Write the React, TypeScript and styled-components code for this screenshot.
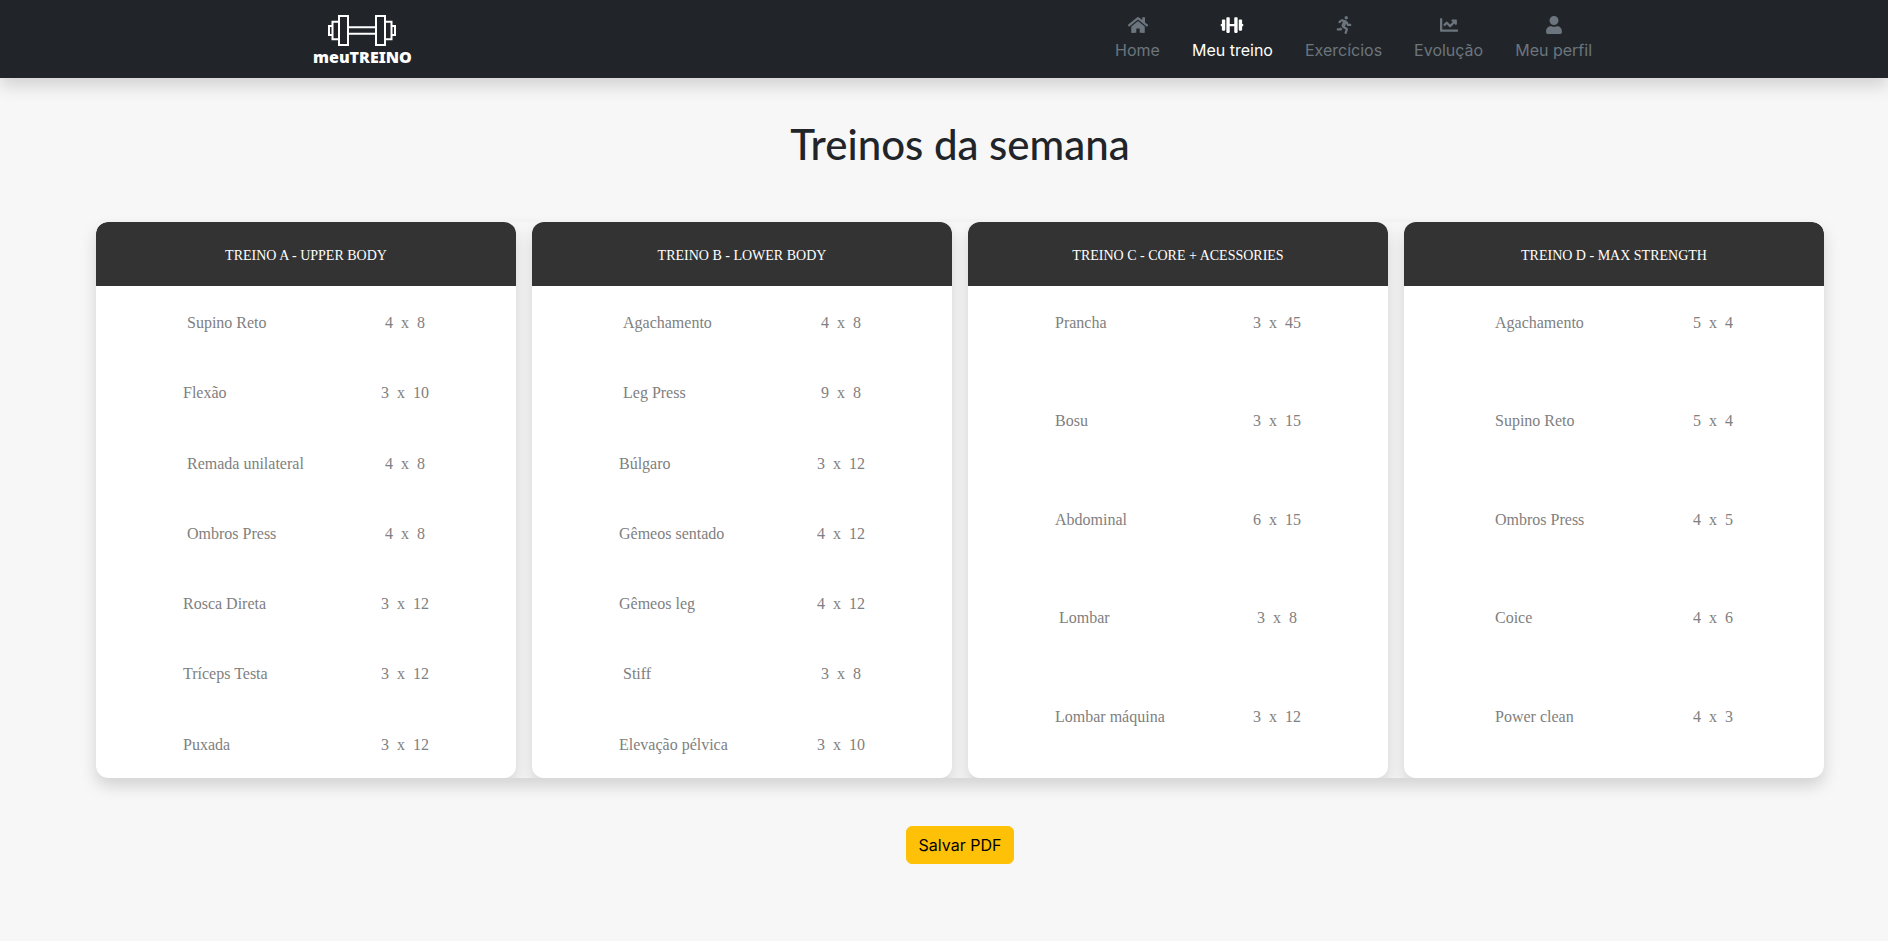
import React from "react";
import styled, { createGlobalStyle } from "styled-components";
import { FaHome, FaDumbbell, FaRunning, FaChartLine, FaUser } from "react-icons/fa";

const GlobalStyle = createGlobalStyle`
  *, *::before, *::after { box-sizing: border-box; }
  body {
    margin: 0;
    background: #f7f7f7;
    color: #212529;
    font-family: Inter, "Liberation Sans", sans-serif;
    font-size: 16px;
    line-height: 24px;
  }
`;

const Header = styled.header`
  background: #212529;
  box-shadow: 0 8px 16px rgba(0, 0, 0, 0.15);
`;

const HeaderInner = styled.div`
  display: flex;
  justify-content: space-between;
  align-items: flex-start;
  max-width: 1328px;
  margin: 0 auto;
  padding-left: 33px;
`;

const Brand = styled.a`
  display: flex;
  flex-direction: column;
  align-items: center;
  padding-top: 14px;
  color: #fff;
  text-decoration: none;
`;

const BrandName = styled.span`
  font-family: "Noto Sans", "Open Sans", sans-serif;
  font-size: 16px;
  font-weight: 900;
  line-height: 20px;
`;

const NavList = styled.ul`
  display: flex;
  margin: 0;
  padding: 0;
  list-style: none;
`;

const NavLink = styled.a<{ $active?: boolean }>`
  display: flex;
  flex-direction: column;
  align-items: center;
  gap: 4px;
  padding: 16px;
  color: ${(p) => (p.$active ? "#fff" : "#6c757d")};
  text-decoration: none;

  svg {
    display: block;
    width: 24px;
    height: 18px;
  }
`;

const Main = styled.main`
  display: flex;
  flex-direction: column;
  align-items: center;
  padding: 48px 64px 48px 96px;
`;

const Title = styled.h1`
  margin: 0 0 60px;
  font-family: Lato, "Open Sans", sans-serif;
  font-size: 42px;
  font-weight: 500;
  line-height: 36px;
`;

const Board = styled.section`
  display: grid;
  grid-template-columns: repeat(4, 1fr);
  gap: 16px;
  width: 100%;
  border-radius: 12px;
  overflow: hidden;
  box-shadow: 0 8px 16px rgba(0, 0, 0, 0.15);
`;

const Card = styled.table`
  display: flex;
  flex-direction: column;
  border-radius: 12px;
  overflow: hidden;
  background: #fff;
  box-shadow: 0 8px 16px rgba(0, 0, 0, 0.15);
  font-family: "Liberation Serif", "Times New Roman", serif;
`;

const CardHead = styled.thead`
  display: block;
  background: #333;
  color: #fff;
`;

const CardTitleRow = styled.tr`
  display: flex;
  justify-content: center;
`;

const CardTitle = styled.th`
  padding: 22px 16px 18px;
  font-size: 14px;
  font-weight: 400;
  text-transform: uppercase;
`;

const CardBody = styled.tbody`
  display: flex;
  flex: 1;
  flex-direction: column;
  min-height: 492px;
  color: #808080;
`;

const ExerciseRow = styled.tr`
  display: flex;
  flex: 1;
  justify-content: center;
  padding-top: 25px;
`;

const ExerciseName = styled.td`
  width: 198px;
  padding: 0;
`;

const Sets = styled.td`
  padding: 0;
  white-space: pre;
`;

const SaveButton = styled.button`
  margin-top: 48px;
  padding: 6px 12px;
  border: 1px solid #ffc107;
  border-radius: 6px;
  background: #ffc107;
  color: #000;
  font: inherit;
  cursor: pointer;
`;

const navItems = [
  { label: "Home", Icon: FaHome },
  { label: "Meu treino", Icon: FaDumbbell, active: true },
  { label: "Exercícios", Icon: FaRunning },
  { label: "Evolução", Icon: FaChartLine },
  { label: "Meu perfil", Icon: FaUser },
];

type Exercise = [name: string, sets: number, reps: number];

const workouts: { title: string; exercises: Exercise[] }[] = [
  {
    title: "Treino A - Upper Body",
    exercises: [
      ["Supino Reto", 4, 8],
      ["Flexão", 3, 10],
      ["Remada unilateral", 4, 8],
      ["Ombros Press", 4, 8],
      ["Rosca Direta", 3, 12],
      ["Tríceps Testa", 3, 12],
      ["Puxada", 3, 12],
    ],
  },
  {
    title: "Treino B - Lower Body",
    exercises: [
      ["Agachamento", 4, 8],
      ["Leg Press", 9, 8],
      ["Búlgaro", 3, 12],
      ["Gêmeos sentado", 4, 12],
      ["Gêmeos leg", 4, 12],
      ["Stiff", 3, 8],
      ["Elevação pélvica", 3, 10],
    ],
  },
  {
    title: "Treino C - Core + Acessories",
    exercises: [
      ["Prancha", 3, 45],
      ["Bosu", 3, 15],
      ["Abdominal", 6, 15],
      ["Lombar", 3, 8],
      ["Lombar máquina", 3, 12],
    ],
  },
  {
    title: "Treino D - Max Strength",
    exercises: [
      ["Agachamento", 5, 4],
      ["Supino Reto", 5, 4],
      ["Ombros Press", 4, 5],
      ["Coice", 4, 6],
      ["Power clean", 4, 3],
    ],
  },
];

function BarbellLogo() {
  return (
    <svg width="70" height="33" viewBox="0 0 70 33" fill="none" stroke="#fff" strokeWidth="2" aria-hidden="true">
      <rect x="12" y="2" width="9" height="29" />
      <rect x="49" y="2" width="9" height="29" />
      <path d="M21 13.300H49M21 19.700H49" />
      <path d="M12 7.700H5.500V25.300H12M58 7.700H64.500V25.300H58" />
      <path d="M5.500 12H2V21H5.500M64.500 12H68V21H64.500" />
    </svg>
  );
}

export default function App() {
  return (
    <>
      <GlobalStyle />
      <Header>
        <HeaderInner>
          <Brand href="#">
            <BarbellLogo />
            <BrandName>meuTREINO</BrandName>
          </Brand>
          <nav>
            <NavList>
              {navItems.map(({ label, Icon, active }) => (
                <li key={label}>
                  <NavLink href="#" $active={active} aria-current={active ? "page" : undefined}>
                    <Icon aria-hidden="true" />
                    {label}
                  </NavLink>
                </li>
              ))}
            </NavList>
          </nav>
        </HeaderInner>
      </Header>
      <Main>
        <Title>Treinos da semana</Title>
        <Board>
          {workouts.map(({ title, exercises }) => (
            <Card key={title}>
              <CardHead>
                <CardTitleRow>
                  <CardTitle colSpan={2}>{title}</CardTitle>
                </CardTitleRow>
              </CardHead>
              <CardBody>
                {exercises.map(([name, sets, reps]) => (
                  <ExerciseRow key={name}>
                    <ExerciseName>{name}</ExerciseName>
                    <Sets>{`${sets}  x  ${reps}`}</Sets>
                  </ExerciseRow>
                ))}
              </CardBody>
            </Card>
          ))}
        </Board>
        <SaveButton type="button">Salvar PDF</SaveButton>
      </Main>
    </>
  );
}
